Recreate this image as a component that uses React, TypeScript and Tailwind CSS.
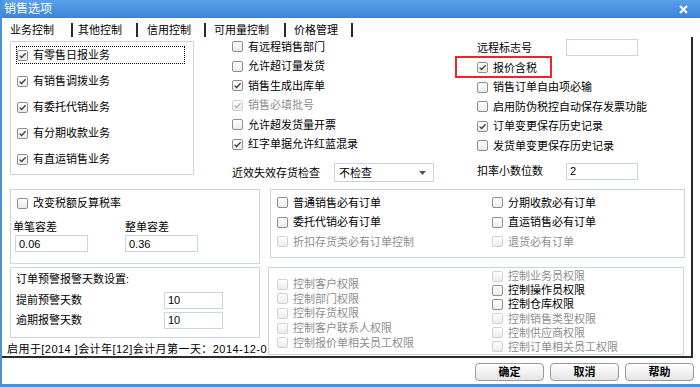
import clsx from "clsx";

function Box({ checked, disabled }: { checked?: boolean; disabled?: boolean }) {
  return (
    <span
      className={clsx(
        "flex h-[11px] w-[11px] shrink-0 items-center justify-center rounded-[2px] border bg-linear-to-b from-white to-[#ebebeb]",
        disabled ? "border-[#d2d2d2]" : "border-[#8e8e8e]"
      )}
    >
      {checked && (
        <svg width="9" height="9" viewBox="0 0 9 9">
          <path d="M1.6 4.6 L3.6 6.5 L7.6 2.2" fill="none" stroke={disabled ? "#b4b4b4" : "#3c3c3c"} strokeWidth="1.3" />
        </svg>
      )}
    </span>
  );
}

function Check({
  label,
  checked,
  disabled,
  className,
}: {
  label: string;
  checked?: boolean;
  disabled?: boolean;
  className?: string;
}) {
  return (
    <div className={clsx("flex items-center gap-[5px] whitespace-nowrap", className)}>
      <Box checked={checked} disabled={disabled} />
      <span className={disabled ? "text-[#8e8e8e]" : "text-black"}>{label}</span>
    </div>
  );
}

function Field({ value, className }: { value?: string; className?: string }) {
  return (
    <div className={clsx("flex h-[17px] items-center border border-[#c9d5e5] bg-white pl-[3px]", className)}>
      {value}
    </div>
  );
}

const tabs = [
  { label: "业务控制", cls: "w-[71px] pl-[8px]" },
  { label: "其他控制", cls: "w-[65px] pl-[5px]" },
  { label: "信用控制", cls: "w-[68px] pl-[9px]" },
  { label: "可用量控制", cls: "w-[80px] pl-[8px]" },
  { label: "价格管理", cls: "w-[67px] pl-[8px]" },
];

const retail = ["有零售日报业务", "有销售调拨业务", "有委托代销业务", "有分期收款业务", "有直运销售业务"];

const middle = [
  { label: "有远程销售部门" },
  { label: "允许超订量发货" },
  { label: "销售生成出库单", checked: true },
  { label: "销售必填批号", checked: true, disabled: true },
  { label: "允许超发货量开票" },
  { label: "红字单据允许红蓝混录", checked: true },
];

const right = [
  { label: "销售订单自由项必输" },
  { label: "启用防伪税控自动保存发票功能" },
  { label: "订单变更保存历史记录", checked: true },
  { label: "发货单变更保存历史记录" },
];

const orders = [
  { label: "普通销售必有订单" },
  { label: "分期收款必有订单" },
  { label: "委托代销必有订单" },
  { label: "直运销售必有订单" },
  { label: "折扣存货类必有订单控制", disabled: true },
  { label: "退货必有订单", disabled: true },
];

const rightsLeft = ["控制客户权限", "控制部门权限", "控制存货权限", "控制客户联系人权限", "控制报价单相关员工权限"];

const rightsRight = [
  { label: "控制业务员权限", disabled: true },
  { label: "控制操作员权限" },
  { label: "控制仓库权限" },
  { label: "控制销售类型权限", disabled: true },
  { label: "控制供应商权限", disabled: true },
  { label: "控制订单相关员工权限", disabled: true },
];

export default function App() {
  return (
    <div className="flex h-[387px] w-[700px] flex-col overflow-hidden border-b-[3px] border-l-2 border-[#4a8fdd] bg-white font-['Liberation_Sans','Noto_Sans_CJK_SC',sans-serif] text-[11px] leading-[14px] text-black">
      {/* title bar */}
      <div className="flex h-[18px] shrink-0 items-center justify-between bg-linear-to-b from-[#5aa0ea] to-[#3a84d8] pl-[2px] pr-[12px] text-white">
        <span className="text-[12px]">销售选项</span>
        <svg width="9" height="9" viewBox="0 0 9 9">
          <path d="M1 1 L8 8 M8 1 L1 8" stroke="#fff" strokeWidth="2" />
        </svg>
      </div>

      {/* tabs */}
      <div className="flex h-[19px] shrink-0 items-end">
        {tabs.map((t) => (
          <div key={t.label} className={clsx("flex h-[15px] items-center justify-between", t.cls)}>
            <span>{t.label}</span>
            <span className="h-[14px] w-[2px] self-end bg-[#2b2b2b]" />
          </div>
        ))}
      </div>

      {/* panel */}
      <div className="flex h-[321px] w-[691px] shrink-0 flex-col border-b-2 border-r-2 border-[#2b2b2b]">
        {/* row A */}
        <div className="flex h-[145px] shrink-0 items-start">
          <div className="ml-[8px] mt-[4px] flex h-[134px] w-[184px] flex-col gap-[8px] border border-[#c9d5e5] pl-[5px] pt-[4px]">
            {retail.map((r, i) => (
              <div
                key={r}
                className={clsx(
                  "flex h-[18px] items-center",
                  i === 0 ? "w-[169px] border border-dotted border-black" : "pl-[1px]"
                )}
              >
                <Check label={r} checked className="gap-[4px]" />
              </div>
            ))}
          </div>

          <div className="ml-[38px] flex w-[245px] flex-col">
            {middle.map((m) => (
              <div key={m.label} className="flex h-[19.5px] items-center">
                <Check label={m.label} checked={m.checked} disabled={m.disabled} />
              </div>
            ))}
            <div className="mt-[9px] flex items-center">
              <span className="w-[102px]">近效失效存货检查</span>
              <div className="flex h-[19px] w-[100px] items-center justify-between border border-[#c9d5e5] pl-[4px] pr-[7px]">
                <span>不检查</span>
                <svg width="7" height="4" viewBox="0 0 7 4">
                  <path d="M0 0 L7 0 L3.5 4 Z" fill="#555" />
                </svg>
              </div>
            </div>
          </div>

          <div className="flex flex-col">
            <div className="mt-[2px] flex h-[17px] items-center">
              <span className="w-[89px]">远程标志号</span>
              <Field className="w-[72px]" />
            </div>
            <div className="relative mt-[2px] flex h-[19.5px] items-center">
              <Check label="报价含税" checked />
              <div className="absolute left-[-22px] top-[-2px] h-[22px] w-[97px] border-2 border-[#e8262b]" />
            </div>
            {right.map((r) => (
              <div key={r.label} className="flex h-[19.5px] items-center">
                <Check label={r.label} checked={r.checked} />
              </div>
            ))}
            <div className="mt-[7px] flex h-[17px] items-center">
              <span className="w-[89px]">扣率小数位数</span>
              <Field className="w-[72px]" value="2" />
            </div>
          </div>
        </div>

        {/* row B */}
        <div className="mt-[7px] flex shrink-0 items-start">
          <div className="ml-[8px] flex h-[75px] w-[250px] flex-col border border-[#c9d5e5]">
            <div className="mt-[5px] flex h-[16px] items-center pl-[6px]">
              <Check label="改变税额反算税率" />
            </div>
            <div className="mt-[9px] flex">
              <div className="flex w-[114px] flex-col pl-[2px]">
                <span className="h-[14px]">单笔容差</span>
                <Field className="ml-[2px] mt-[1px] w-[73px]" value="0.06" />
              </div>
              <div className="flex flex-col">
                <span className="h-[14px]">整单容差</span>
                <Field className="mt-[1px] w-[73px]" value="0.36" />
              </div>
            </div>
          </div>
          <div className="ml-[10px] grid h-[69px] w-[415px] grid-cols-[215px_1fr] content-start border border-[#c9d5e5] pl-[6px] pt-[3px]">
            {orders.map((o) => (
              <div key={o.label} className="flex h-[19.5px] items-center">
                <Check label={o.label} disabled={o.disabled} />
              </div>
            ))}
          </div>
        </div>

        {/* row C */}
        <div className="mt-[3px] flex shrink-0 items-start">
          <div className="flex w-[266px] flex-col overflow-hidden">
            <div className="ml-[8px] flex h-[71px] w-[250px] flex-col border border-[#c9d5e5] pl-[5px] pt-[4px]">
              <span className="h-[14px]">订单预警报警天数设置:</span>
              <div className="mt-[4px] flex h-[20px] items-center">
                <span className="w-[148px]">提前预警天数</span>
                <Field className="w-[59px]" value="10" />
              </div>
              <div className="flex h-[20px] items-center">
                <span className="w-[148px]">逾期报警天数</span>
                <Field className="w-[59px]" value="10" />
              </div>
            </div>
            <span className="ml-[5px] mt-[4px] whitespace-nowrap tracking-[0.45px]">
              启用于[2014 ]会计年[12]会计月第一天：2014-12-01
            </span>
          </div>
          <div className="flex h-[88px] w-[416px] border border-[#c9d5e5] pl-[8px]">
            <div className="flex w-[215px] flex-col pt-[9px]">
              {rightsLeft.map((r) => (
                <div key={r} className="flex h-[14.6px] items-center">
                  <Check label={r} disabled />
                </div>
              ))}
            </div>
            <div className="flex flex-col pt-[1px]">
              {rightsRight.map((r) => (
                <div key={r.label} className="flex h-[14.5px] items-center">
                  <Check label={r.label} disabled={r.disabled} />
                </div>
              ))}
            </div>
          </div>
        </div>
      </div>

      {/* buttons */}
      <div className="flex flex-1 items-start justify-end gap-[6px] pr-[6px] pt-[5px]">
        {["确定", "取消", "帮助"].map((b) => (
          <button
            key={b}
            className="flex h-[18px] w-[69px] items-center justify-center rounded-[4px] border border-[#9a9a9a] bg-linear-to-b from-white to-[#e4e4e4] font-bold"
          >
            {b}
          </button>
        ))}
      </div>
    </div>
  );
}
